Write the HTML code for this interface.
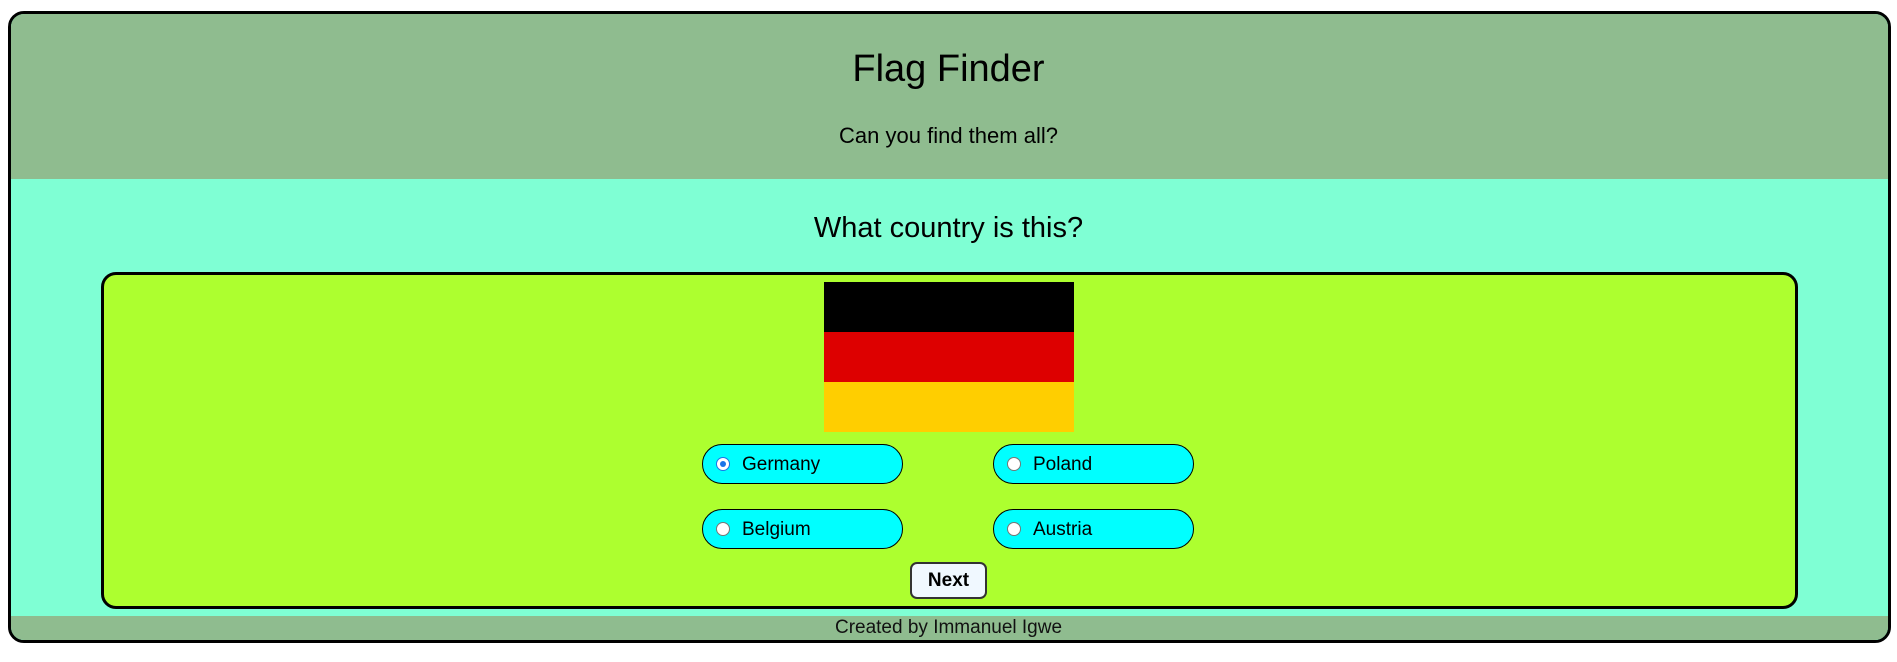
<!DOCTYPE html>
<html><head><style>
*{margin:0;padding:0;box-sizing:border-box}
html,body{width:1897px;height:662px;background:#fff;overflow:hidden;font-family:"Liberation Sans",sans-serif;color:#000}
.outer{position:absolute;left:8px;top:11px;width:1883px;height:632px;border:3px solid #000;border-radius:16px;background:#7fffd4;overflow:hidden}
.hdr{position:absolute;left:0;top:0;width:100%;height:165px;background:#8fbc8f}
.t{position:absolute;width:100%;text-align:center;left:0}
.ft{position:absolute;left:0;top:602px;width:100%;height:30px;background:#8fbc8f}
.inner{position:absolute;left:101px;top:272px;width:1697px;height:337px;border:3px solid #000;border-radius:15px;background:#adff2f}
.flag{position:absolute;left:824px;top:282px;width:250px}
.flag div{height:50px}
.pill{position:absolute;width:201px;height:40px;border:1px solid #000;border-radius:20px;background:#00ffff;font-size:19px}
.pill span{position:absolute;left:39px;top:9px}
.r{position:absolute;left:13px;top:12px;width:14px;height:14px;border-radius:50%;background:#fff;border:1px solid #767676}
.r.on{border:1.5px solid #1a73e8}
.r.on:after{content:"";position:absolute;left:2.5px;top:2.5px;width:6px;height:6px;border-radius:50%;background:#1a73e8}
.next{position:absolute;left:910px;top:562px;width:77px;height:37px;border:2px solid #333;border-radius:7px;background:#f0f8ff;font-weight:bold;font-size:19px;text-align:center;line-height:33px}
</style></head><body>
<div class="outer">
<div class="hdr"></div>
<div class="ft"></div>
</div>
<div class="t" style="top:48px;font-size:38px">Flag Finder</div>
<div class="t" style="top:123px;font-size:22px">Can you find them all?</div>
<div class="t" style="top:212px;font-size:29px">What country is this?</div>
<div class="inner"></div>
<div class="flag"><div style="background:#000"></div><div style="background:#dd0000"></div><div style="background:#ffce00"></div></div>
<div class="pill" style="left:702px;top:444px"><div class="r on"></div><span>Germany</span></div>
<div class="pill" style="left:993px;top:444px"><div class="r"></div><span>Poland</span></div>
<div class="pill" style="left:702px;top:509px"><div class="r"></div><span>Belgium</span></div>
<div class="pill" style="left:993px;top:509px"><div class="r"></div><span>Austria</span></div>
<div class="next">Next</div>
<div class="t" style="top:617px;font-size:19px;color:#111">Created by Immanuel Igwe</div>
</body></html>
